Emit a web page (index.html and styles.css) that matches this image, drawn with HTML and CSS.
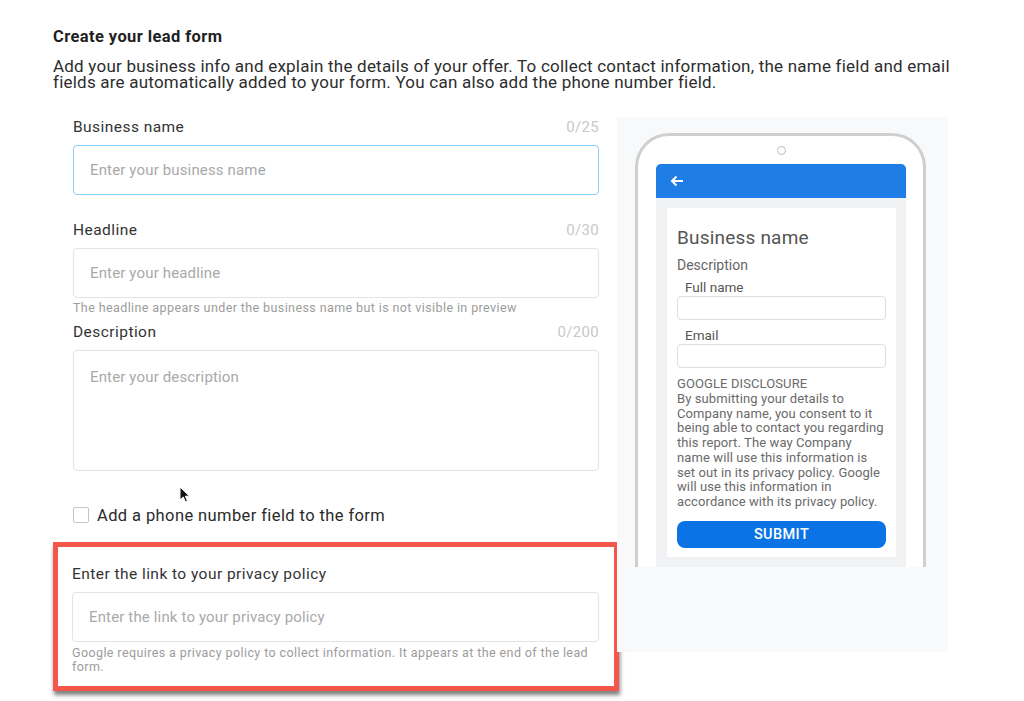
FILE: index.html
```html
<!DOCTYPE html>
<html lang="en">
<head>
<meta charset="utf-8">
<title>Create your lead form</title>
<link rel="stylesheet" href="styles.css">
</head>
<body>
<div class="page">
  <h1 class="title">Create your lead form</h1>
  <p class="intro">Add your business info and explain the details of your offer. To collect contact information, the name field and email fields are automatically added to your form. You can also add the phone number field.</p>

  <div class="content">
    <div class="form-col">
      <div class="field">
        <div class="label-row"><span class="label">Business name</span><span class="counter">0/25</span></div>
        <div class="input focused"><span class="ph">Enter your business name</span></div>
      </div>
      <div class="field field-headline">
        <div class="label-row"><span class="label">Headline</span><span class="counter">0/30</span></div>
        <div class="input"><span class="ph">Enter your headline</span></div>
        <div class="helper">The headline appears under the business name but is not visible in preview</div>
      </div>
      <div class="field field-desc">
        <div class="label-row"><span class="label">Description</span><span class="counter">0/200</span></div>
        <div class="input textarea"><span class="ph">Enter your description</span></div>
      </div>
      <label class="check-row"><span class="checkbox"></span><span class="check-text">Add a phone number field to the form</span></label>

      <div class="highlight">
        <div class="label-row"><span class="label">Enter the link to your privacy policy</span></div>
        <div class="input"><span class="ph">Enter the link to your privacy policy</span></div>
        <div class="helper helper-wrap">Google requires a privacy policy to collect information. It appears at the end of the lead form.</div>
      </div>
    </div>

    <div class="preview">
      <div class="phone">
        <div class="camera"></div>
        <div class="screen">
          <div class="appbar">
            <svg class="back" width="14" height="12" viewBox="0 0 14 12"><path d="M13 6H2.5M6.5 1.5L2 6l4.5 4.5" fill="none" stroke="#fff" stroke-width="2"/></svg>
          </div>
          <div class="screen-body">
            <div class="card">
              <div class="p-title">Business name</div>
              <div class="p-desc">Description</div>
              <div class="p-label">Full name</div>
              <div class="p-input"></div>
              <div class="p-label p-label-email">Email</div>
              <div class="p-input"></div>
              <div class="p-disc">GOOGLE DISCLOSURE<br>By submitting your details to Company name, you consent to it being able to contact you regarding this report. The way Company name will use this information is set out in its privacy policy. Google will use this information in accordance with its privacy policy.</div>
              <div class="p-submit">SUBMIT</div>
            </div>
          </div>
        </div>
      </div>
    </div>
  </div>

  <svg class="cursor" width="12" height="18" viewBox="0 0 12 18"><path d="M1 1v13l3.2-3 2.3 5 2-.9-2.2-4.9H10.5z" fill="#111" stroke="#fff" stroke-width="1"/></svg>
</div>
</body>
</html>
```

FILE: styles.css
```css
* { box-sizing: border-box; }
html, body { margin: 0; padding: 0; background: #fff; }
body {
  font-family: Roboto, "Liberation Sans", Arial, sans-serif;
  color: #202124;
}
.page {
  position: relative;
  width: 1024px;
  height: 701px;
  padding: 28px 0 0 53px;
  overflow: hidden;
}
.title {
  margin: 0;
  font-size: 16.5px;
  line-height: 18px;
  font-weight: 700;
  letter-spacing: 0.4px;
  color: #1f1f1f;
}
.intro {
  margin: 12px 0 0;
  width: 910px;
  font-size: 17px;
  line-height: 16px;
  letter-spacing: 0.22px;
  color: #2d2d2d;
}
.content {
  display: flex;
  margin-top: 27px;
  align-items: flex-start;
}
.form-col {
  width: 566px;
  flex: none;
}
.field { padding: 0 20px 0 20px; }
.label-row {
  display: flex;
  justify-content: space-between;
  align-items: center;
  height: 20px;
  margin-bottom: 8px;
}
.label { font-size: 15.5px; letter-spacing: 0.45px; color: #333; }
.counter { font-size: 15px; color: #c8c8c8; letter-spacing: 0.3px; }
.input {
  height: 50px;
  border: 1px solid #e3e3e3;
  border-radius: 4px;
  display: flex;
  align-items: center;
  padding-left: 16px;
  background: #fff;
}
.input.focused { border: 1.5px solid #86d0f3; }
.ph { font-size: 15px; letter-spacing: 0.15px; color: #a9a9a9; }
.input.textarea {
  height: 121px;
  align-items: flex-start;
  padding-top: 17px;
}
.field-headline { margin-top: 25px; }
.helper {
  font-size: 12.5px;
  line-height: 14px;
  letter-spacing: 0.4px;
  color: #9c9c9c;
  margin-top: 3px;
}
.field-desc { margin-top: 7px; }
.check-row {
  display: flex;
  align-items: center;
  padding-left: 20px;
  margin-top: 35px;
  height: 18px;
}
.checkbox {
  width: 16px;
  height: 16px;
  border: 1px solid #c4c4c4;
  border-radius: 2px;
  background: #fff;
}
.check-text {
  margin-left: 8px;
  font-size: 16.5px;
  letter-spacing: 0.4px;
  color: #2a2a2a;
}
.highlight {
  margin-top: 18px;
  border: 5px solid #f4574a;
  box-shadow: 1px 4px 4px rgba(0,0,0,0.5);
  padding: 17px 15px 12px 14px;
  background: #fff;
}
.highlight .label-row { margin-bottom: 8px; }
.highlight .input { padding-left: 16px; }
.helper-wrap { margin-top: 4px; }

.preview {
  width: 331px;
  height: 535px;
  background: #f8f9fa;
  margin-left: -2px;
  padding: 16px 0 0 18px;
  flex: none;
}
.phone {
  position: relative;
  width: 291px;
  height: 434px;
  border: 3px solid #cfcfcf;
  border-bottom: none;
  border-radius: 34px 34px 0 0;
  background: #fff;
  padding: 28px 17px 0 18px;
}
.camera {
  position: absolute;
  left: 139px;
  top: 10px;
  width: 9px;
  height: 9px;
  border: 1px solid #bcbcbc;
  border-radius: 50%;
}
.screen { width: 250px; height: 403px; display: flex; flex-direction: column; }
.appbar {
  height: 34px;
  background: #1f7de6;
  border-radius: 5px 5px 0 0;
  display: flex;
  align-items: center;
  padding-left: 14px;
}
.screen-body {
  flex: 1;
  background: #f1f2f4;
  padding: 10px 10px 10px 11px;
}
.card {
  height: 100%;
  background: #fff;
  padding: 19px 10px 0 10px;
}
.p-title { font-size: 19px; line-height: 22px; letter-spacing: 0.2px; color: #555; }
.p-desc { font-size: 14px; line-height: 16px; color: #666; margin-top: 8px; }
.p-label { font-size: 13.5px; line-height: 15px; color: #555; margin-left: 8px; margin-top: 7px; }
.p-input {
  height: 24px;
  border: 1px solid #dedede;
  border-radius: 4px;
  margin-top: 1px;
}
.p-label-email { margin-top: 8px; }
.p-disc {
  margin-top: 9px;
  font-size: 13px;
  line-height: 14.75px;
  letter-spacing: 0.1px;
  color: #6a6a6a;
}
.p-submit {
  margin-top: 11px;
  height: 27px;
  background: #0b73e5;
  border-radius: 8px;
  color: #fff;
  font-weight: 500;
  font-size: 14.5px;
  display: flex;
  align-items: center;
  justify-content: center;
  letter-spacing: 0.4px;
}
.cursor {
  position: absolute;
  left: 179px;
  top: 486px;
}
```
